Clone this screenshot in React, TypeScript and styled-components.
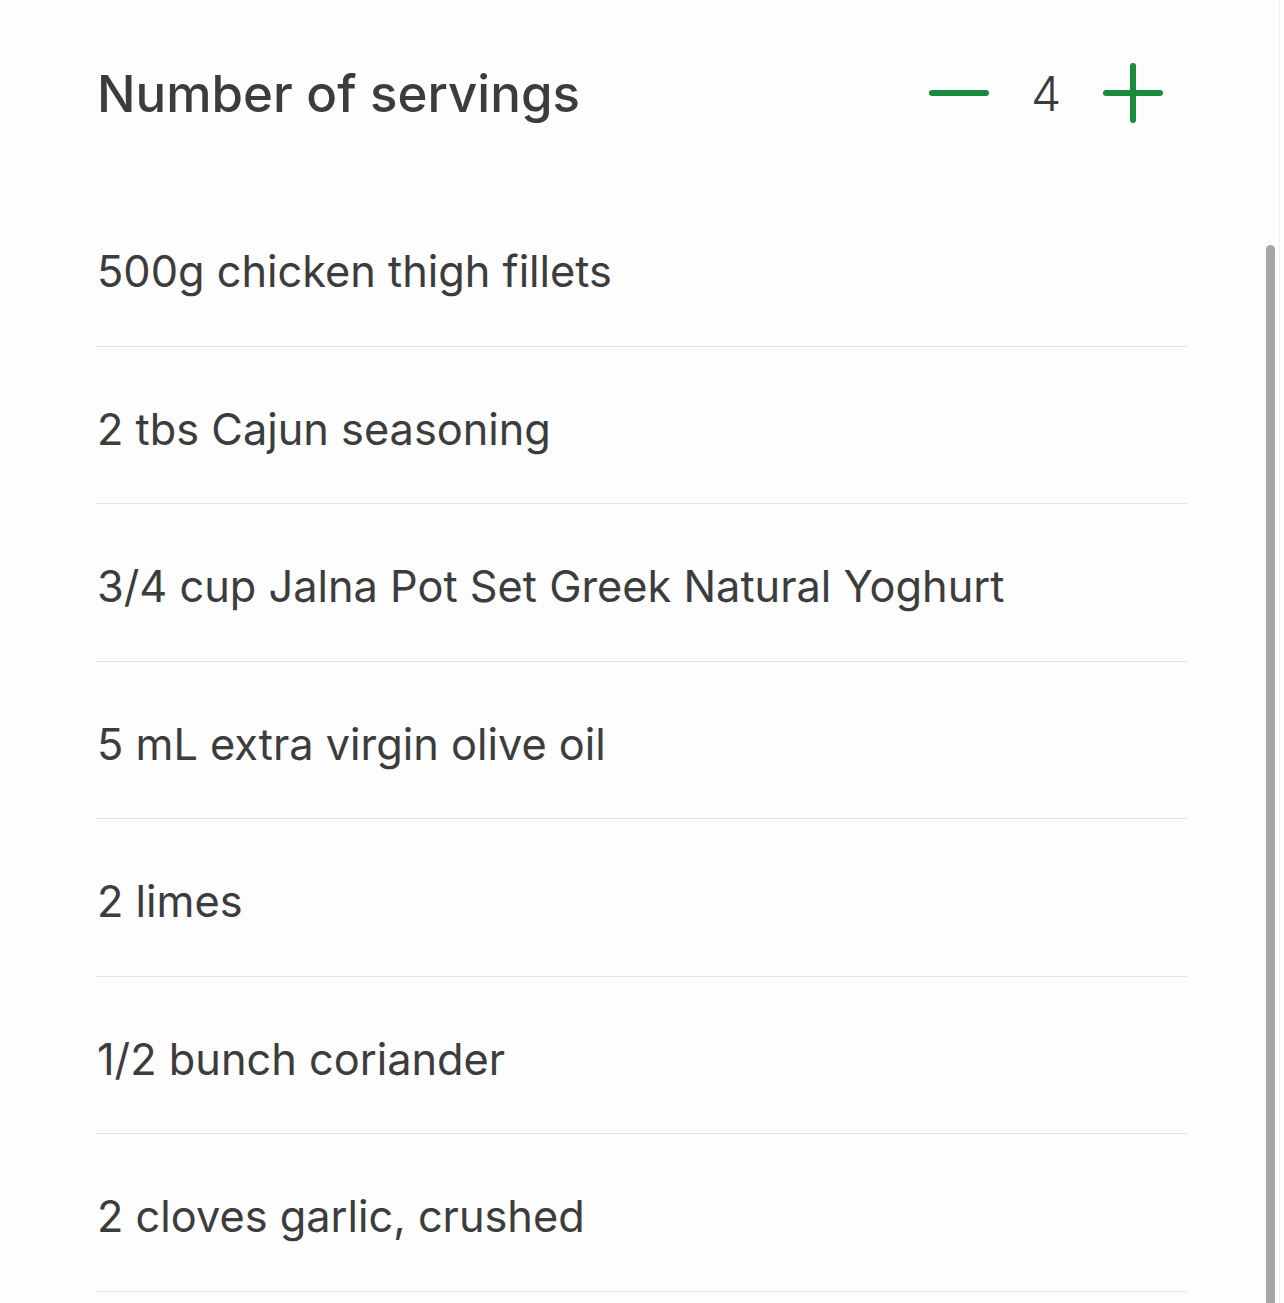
import React, { useState } from "react";
import styled, { createGlobalStyle } from "styled-components";

const GlobalStyle = createGlobalStyle`
  html, body {
    margin: 0;
    padding: 0;
    background: #fdfdfd;
    overflow: hidden;
  }
  * { box-sizing: border-box; }
`;

/**
 * Styled
 */
const Screen = styled.div`
  position: relative;
  width: 1284px;
  height: 1303px;
  overflow: hidden;
  background: #fdfdfd;
  font-family: Inter, "Noto Sans", "Liberation Sans", sans-serif;
  color: #3c3c3c;
`;

const Content = styled.div`
  padding: 0 97px 0 96px;
`;

const Header = styled.div`
  display: flex;
  align-items: center;
  justify-content: space-between;
  height: 189px;
`;

const HeaderTitle = styled.div`
  font-size: 51px;
  font-weight: 500;
  padding-left: 1px;
  margin-bottom: 2px;
`;

const Stepper = styled.div`
  display: flex;
  align-items: center;
  margin-right: 23px;
  margin-bottom: 3px;
`;

const StepButton = styled.button`
  width: 62px;
  height: 62px;
  border: none;
  background: none;
  padding: 0;
  display: flex;
  align-items: center;
  justify-content: center;
  cursor: pointer;
`;

const Count = styled.div`
  width: 112px;
  text-align: center;
  font-size: 48px;
  font-weight: 300;
  color: #3a3a3a;
`;

const List = styled.ul`
  list-style: none;
  margin: 0;
  padding: 0;
`;

const Row = styled.li`
  height: 157.5px;
  display: flex;
  align-items: flex-start;
  padding-top: 56px;
  padding-left: 1px;
  border-bottom: 1.5px solid #e3e3e3;
  font-size: 43.3px;
  font-weight: 400;
  line-height: 52px;
`;

const ScrollThumb = styled.div`
  position: absolute;
  left: 1266px;
  top: 245px;
  width: 9px;
  bottom: 0;
  background: #a7a7a7;
  border-radius: 5px 5px 0 0;
`;

const ScrollEdge = styled.div`
  position: absolute;
  left: 1279px;
  top: 0;
  width: 1px;
  bottom: 0;
  background: #f0f0f0;
`;

const ingredients = [
  "500g chicken thigh fillets",
  "2 tbs Cajun seasoning",
  "3/4 cup Jalna Pot Set Greek Natural Yoghurt",
  "5 mL extra virgin olive oil",
  "2 limes",
  "1/2 bunch coriander",
  "2 cloves garlic, crushed",
];

const GREEN = "#1a8a3e";

const MinusIcon = () => (
  <svg width="62" height="62" viewBox="0 0 62 62">
    <line x1="4" y1="31" x2="58" y2="31" stroke={GREEN} strokeWidth="6" strokeLinecap="round" />
  </svg>
);

const PlusIcon = () => (
  <svg width="62" height="62" viewBox="0 0 62 62">
    <line x1="4" y1="31" x2="58" y2="31" stroke={GREEN} strokeWidth="6" strokeLinecap="round" />
    <line x1="31" y1="4" x2="31" y2="58" stroke={GREEN} strokeWidth="6" strokeLinecap="round" />
  </svg>
);

export default function App() {
  const [servings, setServings] = useState(4);

  return (
    <Screen>
      <GlobalStyle />
      <Content>
        <Header>
          <HeaderTitle>Number of servings</HeaderTitle>
          <Stepper>
            <StepButton aria-label="decrease" onClick={() => setServings((s) => Math.max(1, s - 1))}>
              <MinusIcon />
            </StepButton>
            <Count>{servings}</Count>
            <StepButton aria-label="increase" onClick={() => setServings((s) => s + 1)}>
              <PlusIcon />
            </StepButton>
          </Stepper>
        </Header>
        <List>
          {ingredients.map((item) => (
            <Row key={item}>{item}</Row>
          ))}
        </List>
      </Content>
      <ScrollThumb />
      <ScrollEdge />
    </Screen>
  );
}
